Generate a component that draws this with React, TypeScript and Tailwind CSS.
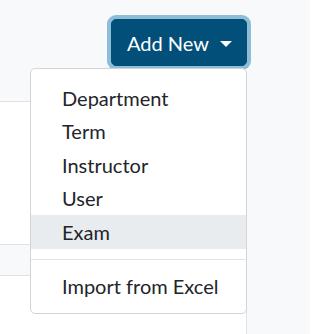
import React from 'react';

const items = ['Department', 'Term', 'Instructor', 'User', 'Exam'];

const AddNewMenu: React.FC = () => {
  return (
    <div className="relative">
      <button className="flex h-[47px] w-[136px] items-center rounded-[5px] border border-[#02507a] bg-[#02507a] pl-[15px] text-[20px] leading-[30px] text-white ring-4 ring-[#8dbdd9]">
        <span>Add New</span>
        <span className="ml-[11px] mt-[2px] h-0 w-0 border-x-[6px] border-t-[6px] border-x-transparent border-t-white" />
      </button>
      <div className="absolute right-0 top-[calc(100%+2px)] z-10 w-[217px] rounded-[5px] border border-[#d3d4d5] bg-white pt-[12px] pb-[10px]">
        {items.map((label) => (
          <div
            key={label}
            className={`flex h-[33.5px] items-center pl-[31px] text-[20px] text-[#212529] ${
              label === 'Exam' ? 'bg-[#e9ecef]' : ''
            }`}
          >
            {label}
          </div>
        ))}
        <div className="my-[10px] border-t border-[#e3e5e8]" />
        <div className="flex h-[33.5px] items-center pl-[31px] text-[20px] text-[#212529]">
          Import from Excel
        </div>
      </div>
    </div>
  );
};

export default function App() {
  return (
    <div
      className="flex h-[334px] w-[310px] flex-col overflow-hidden bg-[#f8f9fa]"
      style={{ fontFamily: 'Lato, "Noto Sans", sans-serif' }}
    >
      <div className="flex justify-end pt-[19px] pr-[63px]">
        <AddNewMenu />
      </div>
      <div className="mt-[35px] flex w-[247px] flex-1 flex-col border-t border-r border-[#dee2e6] bg-white">
        <div className="h-[142px]" />
        <div className="h-[32px] border-y border-[#dee2e6] bg-[#f8f9fa]" />
        <div className="flex-1" />
      </div>
    </div>
  );
}
